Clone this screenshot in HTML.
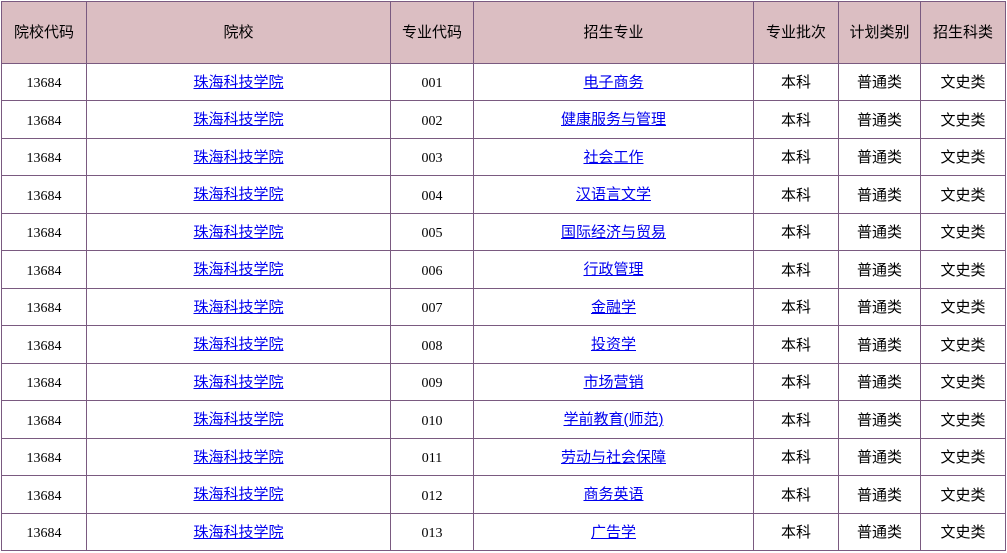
<!DOCTYPE html>
<html><head><meta charset="utf-8"><style>
html,body{margin:0;padding:0;background:#fff;width:1007px;height:553px;overflow:hidden}
table{position:absolute;left:1px;top:1px;border-collapse:collapse;table-layout:fixed;width:1004px;font-family:"Liberation Serif","Noto Sans CJK SC",serif;font-size:14px;color:#000}
td,th{border:1px solid #7a5a80;text-align:center;padding:0;font-weight:normal;height:30px;line-height:16px;overflow:hidden}
td span{position:relative;top:2px}
th{background:#dbbec2;height:61px;font-family:"Liberation Sans","Noto Sans CJK SC",sans-serif;font-size:15px}
td.c{font-family:"Liberation Sans","Noto Sans CJK SC",sans-serif;font-size:15px;padding-top:2px}
a{color:#0000ee;text-decoration:underline;font-family:"Liberation Sans","Noto Sans CJK SC",sans-serif;font-size:15px;position:relative;top:1px}
</style></head><body>
<table>
<colgroup><col style="width:85px"><col style="width:304px"><col style="width:83px"><col style="width:280px"><col style="width:85px"><col style="width:82px"><col style="width:85px"></colgroup>
<tr style="height:62px"><th>院校代码</th><th>院校</th><th>专业代码</th><th>招生专业</th><th>专业批次</th><th>计划类别</th><th>招生科类</th></tr>
<tr style="height:37px"><td><span>13684</span></td><td><a>珠海科技学院</a></td><td><span>001</span></td><td><a>电子商务</a></td><td class="c">本科</td><td class="c">普通类</td><td class="c">文史类</td></tr>
<tr style="height:38px"><td><span>13684</span></td><td><a>珠海科技学院</a></td><td><span>002</span></td><td><a>健康服务与管理</a></td><td class="c">本科</td><td class="c">普通类</td><td class="c">文史类</td></tr>
<tr style="height:37px"><td><span>13684</span></td><td><a>珠海科技学院</a></td><td><span>003</span></td><td><a>社会工作</a></td><td class="c">本科</td><td class="c">普通类</td><td class="c">文史类</td></tr>
<tr style="height:38px"><td><span>13684</span></td><td><a>珠海科技学院</a></td><td><span>004</span></td><td><a>汉语言文学</a></td><td class="c">本科</td><td class="c">普通类</td><td class="c">文史类</td></tr>
<tr style="height:37px"><td><span>13684</span></td><td><a>珠海科技学院</a></td><td><span>005</span></td><td><a>国际经济与贸易</a></td><td class="c">本科</td><td class="c">普通类</td><td class="c">文史类</td></tr>
<tr style="height:38px"><td><span>13684</span></td><td><a>珠海科技学院</a></td><td><span>006</span></td><td><a>行政管理</a></td><td class="c">本科</td><td class="c">普通类</td><td class="c">文史类</td></tr>
<tr style="height:37px"><td><span>13684</span></td><td><a>珠海科技学院</a></td><td><span>007</span></td><td><a>金融学</a></td><td class="c">本科</td><td class="c">普通类</td><td class="c">文史类</td></tr>
<tr style="height:38px"><td><span>13684</span></td><td><a>珠海科技学院</a></td><td><span>008</span></td><td><a>投资学</a></td><td class="c">本科</td><td class="c">普通类</td><td class="c">文史类</td></tr>
<tr style="height:37px"><td><span>13684</span></td><td><a>珠海科技学院</a></td><td><span>009</span></td><td><a>市场营销</a></td><td class="c">本科</td><td class="c">普通类</td><td class="c">文史类</td></tr>
<tr style="height:38px"><td><span>13684</span></td><td><a>珠海科技学院</a></td><td><span>010</span></td><td><a>学前教育(师范)</a></td><td class="c">本科</td><td class="c">普通类</td><td class="c">文史类</td></tr>
<tr style="height:37px"><td><span>13684</span></td><td><a>珠海科技学院</a></td><td><span>011</span></td><td><a>劳动与社会保障</a></td><td class="c">本科</td><td class="c">普通类</td><td class="c">文史类</td></tr>
<tr style="height:38px"><td><span>13684</span></td><td><a>珠海科技学院</a></td><td><span>012</span></td><td><a>商务英语</a></td><td class="c">本科</td><td class="c">普通类</td><td class="c">文史类</td></tr>
<tr style="height:37px"><td><span>13684</span></td><td><a>珠海科技学院</a></td><td><span>013</span></td><td><a>广告学</a></td><td class="c">本科</td><td class="c">普通类</td><td class="c">文史类</td></tr>
</table>
</body></html>
